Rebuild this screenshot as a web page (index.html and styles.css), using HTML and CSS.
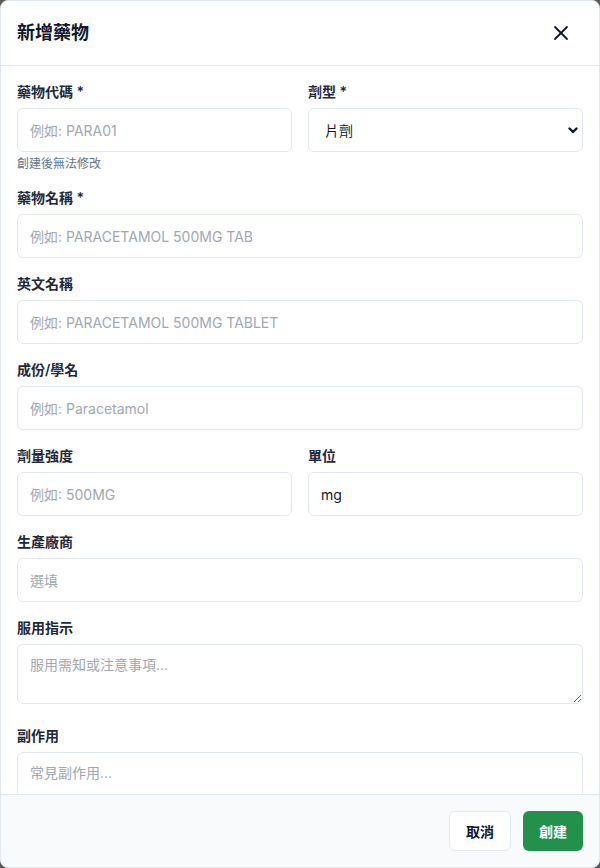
FILE: index.html
```html
<!DOCTYPE html>
<html lang="zh-Hant">
<head>
<meta charset="utf-8">
<title>新增藥物</title>
<link rel="stylesheet" href="styles.css">
</head>
<body>
<div class="modal">
  <header class="modal-header">
    <h2 class="modal-title">新增藥物</h2>
    <button class="close-btn" type="button" aria-label="關閉">
      <svg width="24" height="24" viewBox="0 0 24 24" fill="none" stroke="currentColor" stroke-width="1.8" stroke-linecap="round" stroke-linejoin="round"><path d="M18 6 6 18"/><path d="M6 6l12 12"/></svg>
    </button>
  </header>
  <div class="modal-body">
    <div class="row">
      <div class="field">
        <label class="label">藥物代碼 *</label>
        <input class="input" type="text" placeholder="例如: PARA01">
        <p class="hint">創建後無法修改</p>
      </div>
      <div class="field">
        <label class="label">劑型 *</label>
        <div class="select-wrap">
          <select class="input select">
            <option>片劑</option>
          </select>
          <svg class="chevron" width="12" height="12" viewBox="0 0 12 12" fill="none" stroke="currentColor" stroke-width="2.4" stroke-linecap="round" stroke-linejoin="round"><path d="M2.5 4.5 6 8l3.5-3.5"/></svg>
        </div>
      </div>
    </div>
    <div class="field">
      <label class="label">藥物名稱 *</label>
      <input class="input" type="text" placeholder="例如: PARACETAMOL 500MG TAB">
    </div>
    <div class="field">
      <label class="label">英文名稱</label>
      <input class="input" type="text" placeholder="例如: PARACETAMOL 500MG TABLET">
    </div>
    <div class="field">
      <label class="label">成份/學名</label>
      <input class="input" type="text" placeholder="例如: Paracetamol">
    </div>
    <div class="row">
      <div class="field">
        <label class="label">劑量強度</label>
        <input class="input" type="text" placeholder="例如: 500MG">
      </div>
      <div class="field">
        <label class="label">單位</label>
        <input class="input" type="text" value="mg">
      </div>
    </div>
    <div class="field">
      <label class="label">生產廠商</label>
      <input class="input" type="text" placeholder="選填">
    </div>
    <div class="field field-area">
      <label class="label">服用指示</label>
      <textarea class="input textarea" placeholder="服用需知或注意事項..."></textarea>
    </div>
    <div class="field field-area">
      <label class="label">副作用</label>
      <textarea class="input textarea" placeholder="常見副作用..."></textarea>
    </div>
  </div>
  <footer class="modal-footer">
    <button class="btn btn-outline" type="button">取消</button>
    <button class="btn btn-primary" type="button">創建</button>
  </footer>
</div>
</body>
</html>
```
FILE: styles.css
```css
* { box-sizing: border-box; }
html, body { margin: 0; padding: 0; }
body {
  background: #5a5a5a;
  font-family: "Inter", "Noto Sans CJK TC", sans-serif;
  color: #0f172a;
}
.modal {
  width: 600px;
  height: 868px;
  background: #ffffff;
  border: 1px solid #e2e8f0;
  border-radius: 8px;
  overflow: hidden;
  display: flex;
  flex-direction: column;
}
.modal-header {
  flex: none;
  height: 65px;
  border-bottom: 1px solid #e2e8f0;
  display: flex;
  align-items: center;
  justify-content: space-between;
  padding: 0 16px;
}
.modal-title {
  margin: 0;
  font-size: 18px;
  font-weight: 600;
  line-height: 28px;
  color: #0f172a;
}
.close-btn {
  width: 44px;
  height: 44px;
  border: 0;
  background: transparent;
  padding: 0;
  display: flex;
  align-items: center;
  justify-content: center;
  color: #0f172a;
  cursor: pointer;
}
.modal-body {
  flex: 1;
  min-height: 0;
  overflow: hidden;
  padding: 16px 16px 0;
}
.row {
  display: grid;
  grid-template-columns: 1fr 1fr;
  column-gap: 16px;
}
.field { margin-bottom: 16px; }
.field-area { margin-bottom: 22px; }
.label {
  display: block;
  font-size: 14px;
  line-height: 20px;
  font-weight: 600;
  color: #1e293b;
  margin-bottom: 6px;
}
.input {
  display: block;
  width: 100%;
  height: 44px;
  border: 1px solid #e2e8f0;
  border-radius: 6px;
  background: #ffffff;
  padding: 0 12px;
  font-family: "Inter", "Noto Sans CJK TC", sans-serif;
  font-size: 14px;
  color: #0f172a;
  outline: none;
}
.input::placeholder { color: #a1a8b3; }
.hint {
  margin: 4px 0 0;
  font-size: 12px;
  line-height: 16px;
  color: #64748b;
}
.select-wrap { position: relative; }
.select {
  appearance: none;
  -webkit-appearance: none;
  padding-left: 16px;
  padding-right: 32px;
}
.chevron {
  position: absolute;
  right: 4px;
  top: 16px;
  color: #0f172a;
  pointer-events: none;
}
.textarea {
  height: 60px;
  padding: 10px 12px;
  line-height: 20px;
  resize: vertical;
}
.modal-footer {
  flex: none;
  border-top: 1px solid #e2e8f0;
  background: #f8fafc;
  padding: 16px;
  display: flex;
  justify-content: flex-end;
  gap: 12px;
}
.btn {
  height: 40px;
  padding: 0 16px;
  border-radius: 6px;
  font-family: "Inter", "Noto Sans CJK TC", sans-serif;
  font-size: 14px;
  font-weight: 600;
  cursor: pointer;
}
.btn-outline {
  background: #ffffff;
  border: 1px solid #e2e8f0;
  color: #0f172a;
}
.btn-primary {
  background: #23914c;
  border: 0;
  color: #ffffff;
}
```
